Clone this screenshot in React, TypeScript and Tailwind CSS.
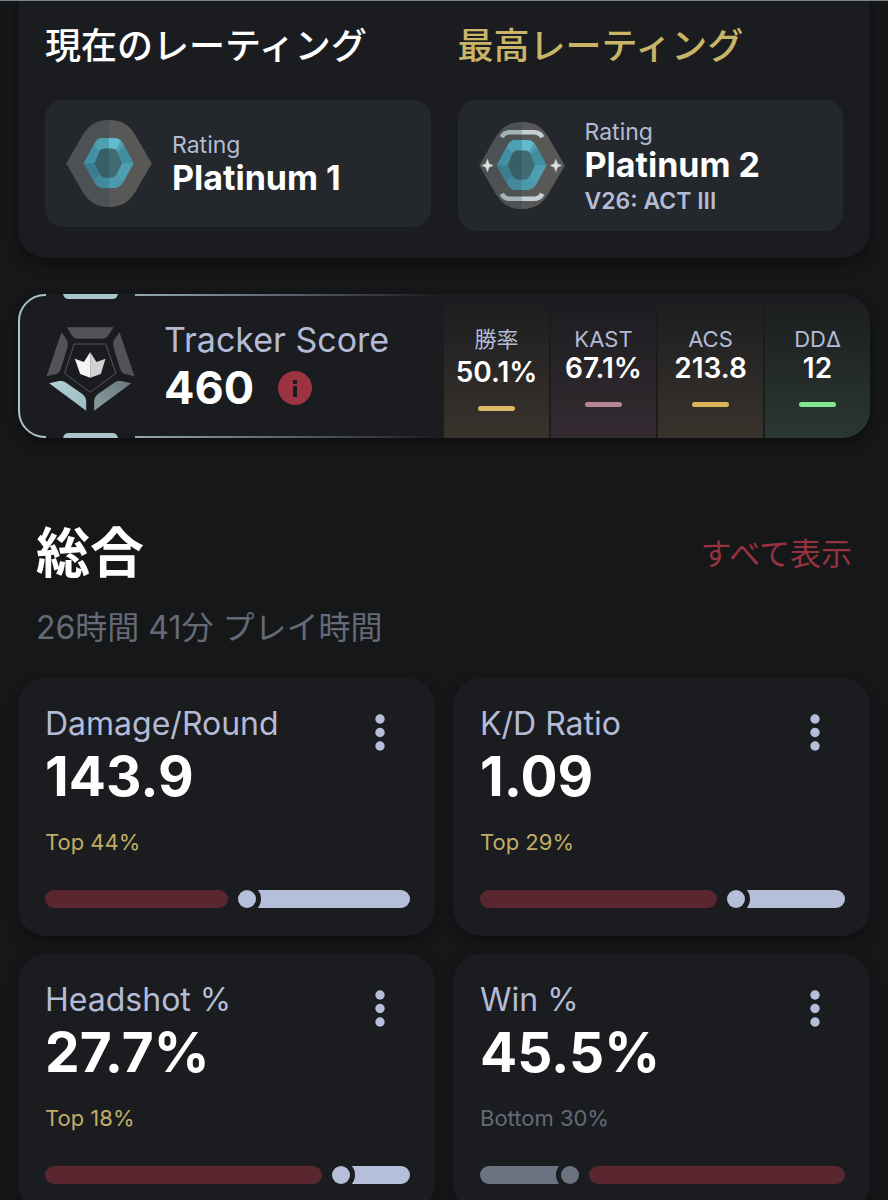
import clsx from "clsx";

const scoreStats = [
  { label: "勝率", value: "50.1%", bar: "bg-[#dcb866]", tint: "to-[#39332c]", cjk: true },
  { label: "KAST", value: "67.1%", bar: "bg-[#b58691]", tint: "to-[#342b31]" },
  { label: "ACS", value: "213.8", bar: "bg-[#dcb45c]", tint: "to-[#39332c]" },
  { label: "DDΔ", value: "12", bar: "bg-[#83e492]", tint: "to-[#2a3830]" },
];

const overview = [
  { label: "Damage/Round", value: "143.9", rank: "Top 44%", split: 50 },
  { label: "K/D Ratio", value: "1.09", rank: "Top 29%", split: 65 },
  { label: "Headshot %", value: "27.7%", rank: "Top 18%", split: 76 },
  { label: "Win %", value: "45.5%", rank: "Bottom 30%", split: 27, bottom: true },
];

function RankBadge({ decorated = false }: { decorated?: boolean }) {
  return (
    <svg viewBox="0 0 258 262" className="h-[87px] w-[86px] shrink-0" aria-hidden="true">
      <path d="M129 0C91 0 68 15 50 45L0 131l50 86c18 30 41 45 79 45z" fill="#4c5253" />
      <path d="M129 0c38 0 61 15 79 45l50 86-50 86c-18 30-41 45-79 45z" fill="#585856" />
      <path d="M129 54h-16c-13 0-20 4-26 14L53 130l33 60c7 11 14 15 27 15h16z" fill="#42899c" />
      <path d="M129 54h14c13 0 20 4 26 14l34 62-33 60c-7 11-14 15-27 15h-14z" fill="#4b9aac" />
      <path d="M87 68c6-10 13-14 26-14h16v35h-18l-13 10-16-21z" fill="#4f9fb2" />
      <path d="M129 54h14c10 0 17 3 22 9l-15 29-9-3h-12z" fill="#62bccd" />
      <path d="M165 63l4 5 8 14-20 20-7-10z" fill="#539fb1" />
      <path d="M53 130l30-55 19 19-16 36z" fill="#4390a4" />
      <path d="M203 130l-29-53-18 20 12 33z" fill="#438ea1" />
      <path d="M53 130h35l12 31-18 22z" fill="#3b7c8f" />
      <path d="M203 130h-35l-14 31 17 27z" fill="#4f9fb0" />
      <path d="M129 86h-13c-8 0-13 3-16 9l-14 35 15 32c5 8 10 12 18 12h10z" fill="#375f66" />
      <path d="M129 86h9c8 0 13 3 16 9l14 35-15 32c-5 8-10 12-18 12h-6z" fill="#3f6c72" />
      {decorated && (
        <>
          <path d="M68 46c6-13 14-15 25-15h36" fill="none" stroke="#a4b3b8" strokeWidth="14" />
          <path d="M129 31h36c11 0 19 2 25 15" fill="none" stroke="#c3d1d6" strokeWidth="14" />
          <path d="M68 216c6 13 14 15 25 15h36" fill="none" stroke="#a4b3b8" strokeWidth="14" />
          <path d="M129 231h36c11 0 19-2 25-15" fill="none" stroke="#c3d1d6" strokeWidth="14" />
          <path d="M25 112l5 14 12 5-12 5-5 14-5-14-12-5 12-5z" fill="#e2e2e2" stroke="#bcbcbc" strokeWidth="2" />
          <path d="M231 112l5 14 12 5-12 5-5 14-5-14-12-5 12-5z" fill="#e2e2e2" stroke="#bcbcbc" strokeWidth="2" />
        </>
      )}
    </svg>
  );
}

function ScoreEmblem() {
  return (
    <svg viewBox="0 0 266 252" className="mt-[6px] h-[84px] w-[89px] shrink-0" aria-hidden="true">
      <defs>
        <linearGradient id="emblem-left" x1="0" y1="0" x2="1" y2="1">
          <stop offset="0" stopColor="#b3d0d6" />
          <stop offset="1" stopColor="#9dbbc1" />
        </linearGradient>
        <linearGradient id="emblem-right" x1="1" y1="0" x2="0" y2="1">
          <stop offset="0" stopColor="#69797d" />
          <stop offset="1" stopColor="#8a9da1" />
        </linearGradient>
      </defs>
      <path d="M62 1h140l-14 22c-6 8-10 12-20 12H96c-10 0-14-4-20-12z" fill="#525357" />
      <path d="M46 16l14 20c5 8 6 14 4 24L46 120c-4 14-8 19-20 22L1 148z" fill="#525357" />
      <path d="M220 16l-14 20c-5 8-6 14-4 24l18 60c4 14 8 19 20 22l25 6z" fill="#525357" />
      <path d="M9 169l26-6c10-2 17-1 26 5l42 29c13 9 17 15 17 28v26z" fill="url(#emblem-left)" />
      <path d="M255 169l-26-6c-10-2-17-1-26 5l-42 29c-13 9-17 15-17 28v26z" fill="url(#emblem-right)" />
      <path d="M84 51h95l30 88-77 57-77-57z" fill="none" stroke="#55565a" strokeWidth="3" />
      <path d="M86 95l27 10 19-29v76l-30-11z" fill="#f4f4f4" />
      <path d="M178 95l-27 10-19-29v76l32-11z" fill="#d2d2d3" />
    </svg>
  );
}

// Broken outline on the left half of the score banner, fading out to the right
function ScoreFrame() {
  return (
    <svg
      viewBox="0 0 426 144"
      className="pointer-events-none absolute inset-y-0 left-0 h-full w-[426px]"
      preserveAspectRatio="none"
      aria-hidden="true"
    >
      <defs>
        <linearGradient id="frame-fade" gradientUnits="userSpaceOnUse" x1="117" y1="0" x2="420" y2="0">
          <stop offset="0" stopColor="#93a9af" />
          <stop offset="0.5" stopColor="#5d636c" />
          <stop offset="1" stopColor="#5d636c" stopOpacity="0" />
        </linearGradient>
      </defs>
      <path d="M28 1h-1A26 26 0 0 0 1 27v90a26 26 0 0 0 26 26h1" fill="none" stroke="#a9c4ca" strokeWidth="2" />
      <path d="M45 0h55c-1 4-3 5-6 5H51c-3 0-5-1-6-5z" fill="#a9c4ca" />
      <path d="M45 144h55c-1-4-3-5-6-5H51c-3 0-5 1-6 5z" fill="#a9c4ca" />
      <path d="M117 0h303v2H117zM117 142h303v2H117z" fill="url(#frame-fade)" />
    </svg>
  );
}

function RatingCard({ title, rank, act, peak }: { title: string; rank: string; act?: string; peak?: boolean }) {
  return (
    <section>
      <h2 className={clsx("text-[36px] font-medium leading-[52px]", peak ? "text-[#c8b568]" : "text-white")}>
        {title}
      </h2>
      <div
        className={clsx(
          "mt-7 flex items-center gap-5 rounded-[18px] bg-[#24272b] px-[21px]",
          act ? "py-[13px]" : "py-5"
        )}
      >
        <RankBadge decorated={peak} />
        <div className={clsx(act && "pt-[5px]")}>
          <p className="text-[23px] leading-[28px] text-[#b3bbd6]">Rating</p>
          <p className="text-[34px] font-bold leading-[38px] text-white">{rank}</p>
          {act && <p className="text-[23px] font-semibold leading-[34px] text-[#b3bbd6]">{act}</p>}
        </div>
      </div>
    </section>
  );
}

function PercentileBar({ split, bottom }: { split: number; bottom?: boolean }) {
  const marker = "size-[18px] rounded-full shadow-[0_0_0_5px_#1b1c1f]";
  return (
    <div className="mt-8 flex h-[18px] gap-[10px]">
      <div
        className={clsx("flex shrink-0 justify-end rounded-full", bottom ? "bg-[#6b7280]" : "bg-[#5a2630]")}
        style={{ width: `${split}%` }}
      >
        {bottom && <span className={clsx(marker, "bg-[#6b7280]")} />}
      </div>
      <div className={clsx("flex flex-1 rounded-full", bottom ? "bg-[#5a2630]" : "bg-[#b5bfda]")}>
        {!bottom && <span className={clsx(marker, "bg-[#b5bfda]")} />}
      </div>
    </div>
  );
}

function StatCard({ label, value, rank, split, bottom }: (typeof overview)[number]) {
  return (
    <article className="rounded-[28px] bg-[#1b1c1f] pb-7 pl-[27px] pr-[25px] pt-[26px] shadow-[0_6px_14px_rgba(0,0,0,0.35)]">
      <div className="flex items-start justify-between">
        <div>
          <h3 className="text-[32px] leading-[40px] text-[#b3bbd6]">{label}</h3>
          <p className="text-[55px] font-bold leading-[64px] text-white">{value}</p>
        </div>
        <button type="button" aria-label={`${label} options`} className="mr-[15px] px-[10px] pt-[10px] text-[#b5bfda]">
          <svg viewBox="0 0 10 37" className="h-[37px] w-[10px]" fill="currentColor" aria-hidden="true">
            <circle cx="5" cy="5" r="4.7" />
            <circle cx="5" cy="18.5" r="4.7" />
            <circle cx="5" cy="32" r="4.7" />
          </svg>
        </button>
      </div>
      <p className={clsx("mt-[18px] text-[22px] leading-[32px]", bottom ? "text-[#646a77]" : "text-[#c0ae66]")}>
        {rank}
      </p>
      <PercentileBar split={split} bottom={bottom} />
    </article>
  );
}

export default function App() {
  return (
    <main
      lang="ja"
      className="min-h-screen overflow-hidden border-t border-[#7c848b] bg-[#161719] px-[18px] pb-6 font-['Inter','Noto_Sans_CJK_JP',sans-serif]"
    >
      <div className="-mt-5 grid grid-cols-2 items-start gap-[27px] rounded-[28px] bg-[#1b1c1f] px-[27px] pb-[27px] pt-[39px] shadow-[0_6px_14px_rgba(0,0,0,0.4)]">
        <RatingCard title="現在のレーティング" rank="Platinum 1" />
        <RatingCard title="最高レーティング" rank="Platinum 2" act="V26: ACT III" peak />
      </div>

      <section className="relative mt-9 flex rounded-[28px] bg-[#1b1c1f] shadow-[0_6px_14px_rgba(0,0,0,0.4)]">
        <ScoreFrame />
        <div className="flex flex-1 items-center gap-[29px] pl-7">
          <ScoreEmblem />
          <div>
            <h2 className="text-[34px] leading-[44px] text-[#b3bbd6]">Tracker Score</h2>
            <div className="flex items-center gap-6">
              <p className="text-[45px] font-bold leading-[52px] text-white">460</p>
              <button type="button" aria-label="Tracker Score info">
                <svg viewBox="0 0 34 34" className="size-[34px]" aria-hidden="true">
                  <circle cx="17" cy="17" r="17" fill="#9b3340" />
                  <path d="M15 9h4v4h-4zM15 15h4v11h-4z" fill="#1b1c1f" />
                </svg>
              </button>
            </div>
          </div>
        </div>
        <dl className="grid h-36 w-1/2 grid-cols-4 gap-[2px] overflow-hidden rounded-r-[28px]">
          {scoreStats.map((stat) => (
            <div
              key={stat.label}
              className={clsx("flex flex-col items-center justify-center bg-linear-to-b from-[#1b1c1f]", stat.tint)}
            >
              <dt className={clsx("text-[22px] text-[#b3bbd6]", stat.cjk ? "leading-[36px]" : "leading-[28px]")}>
                {stat.label}
              </dt>
              <dd className="text-[28px] font-semibold leading-[30px] text-white">{stat.value}</dd>
              <dd className={clsx("mt-[19px] h-[5px] w-[37px] rounded-full", stat.bar)} />
            </div>
          ))}
        </dl>
      </section>

      <section className="mt-[84px]">
        <div className="flex items-center justify-between px-[18px]">
          <h2 className="text-[54px] font-bold leading-[64px] text-white">総合</h2>
          <a href="#all" className="text-[31px] leading-[40px] text-[#963240]">
            すべて表示
          </a>
        </div>
        <p className="mt-[22px] pl-[18px] text-[32px] leading-[40px] text-[#646a77]">
          26時間 41分 プレイ時間
        </p>
        <div className="mt-[30px] grid grid-cols-2 gap-[18px]">
          {overview.map((stat) => (
            <StatCard key={stat.label} {...stat} />
          ))}
        </div>
      </section>
    </main>
  );
}
